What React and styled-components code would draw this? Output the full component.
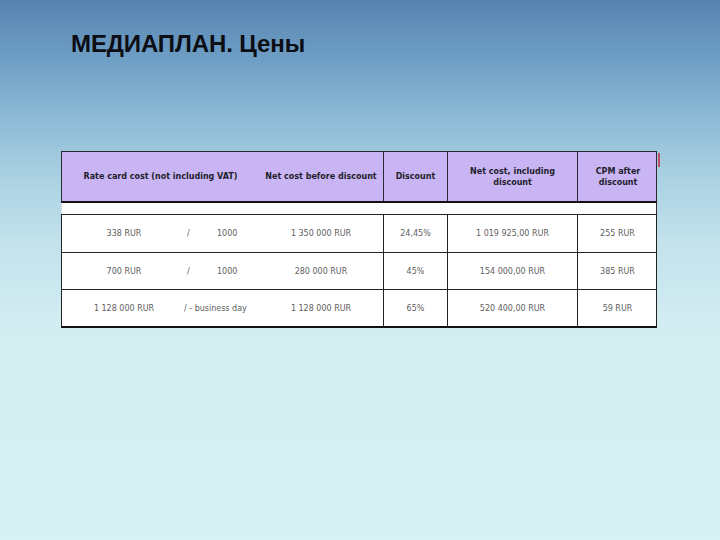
import React from "react";
import styled, { createGlobalStyle } from "styled-components";

const Global = createGlobalStyle`
  html, body { margin: 0; padding: 0; }
  body { width: 720px; height: 540px; overflow: hidden; }
`;

const Page = styled.div`
  width: 720px;
  height: 540px;
  box-sizing: border-box;
  padding: 30px 0 0 61px;
  background: linear-gradient(
    180deg,
    #5783b0 0%,
    #6c9cc3 10%,
    #8dbad6 22%,
    #a9d0e2 32%,
    #c2e2ec 45%,
    #d3edf2 60%,
    #d8f1f4 100%
  );
  font-family: "DejaVu Sans", Verdana, sans-serif;
`;

const Title = styled.h1`
  margin: 0 0 0 10px;
  font-family: "Liberation Sans", Arial, sans-serif;
  font-weight: 700;
  font-size: 24px;
  line-height: 28px;
  color: #0d0d14;
  letter-spacing: -0.1px;
`;

const Table = styled.div`
  margin-top: 93px;
  width: 596px;
`;

const HeaderRow = styled.div`
  position: relative;
  display: grid;
  grid-template-columns: 197px 124px 64px 130px 81px;
  height: 52px;
  box-sizing: border-box;
  background: #c9b5f3;
  border: 1px solid #2a2a33;
  border-bottom: 2px solid #111;
  &::after {
    content: "";
    position: absolute;
    right: -4px;
    top: 1px;
    width: 2px;
    height: 14px;
    background: #c0506a;
  }
`;

const HeadCell = styled.div`
  display: flex;
  align-items: center;
  justify-content: center;
  text-align: center;
  padding: 0 ${(p) => p.$pad || 4}px;
  font-size: 8px;
  font-weight: 700;
  line-height: 11px;
  color: #1e1e2c;
  border-left: ${(p) => (p.$line ? "1px solid #2a2a33" : "none")};
`;

const Gap = styled.div`
  height: 11px;
  background: #fdfefe;
  border-left: 1px solid #d6dde2;
  border-right: 1px solid #333;
`;

const Body = styled.div`
  border-top: 1px solid #222;
  border-bottom: 2px solid #111;
  border-left: 1px solid #222;
  border-right: 1px solid #222;
  background: #fff;
`;

const Row = styled.div`
  display: grid;
  grid-template-columns: 124px 73px 124px 64px 130px 80px;
  height: 37px;
  box-sizing: border-box;
  border-top: ${(p) => (p.$first ? "none" : "1px solid #222")};
`;

const Cell = styled.div`
  display: flex;
  align-items: center;
  justify-content: ${(p) => (p.$left ? "flex-start" : "center")};
  font-size: 8px;
  color: #5e5e5e;
  white-space: pre;
  border-left: ${(p) => (p.$line ? "1px solid #222" : "none")};
`;

const Slash = styled.span`
  display: inline-block;
  width: ${(p) => (p.$wide ? "30px" : "auto")};
  margin-left: ${(p) => (p.$wide ? "1px" : "-2px")};
`;

const rows = [
  { a: "338 RUR", slash: "/", per: "1000", net: "1 350 000 RUR", d: "24,45%", n: "1 019 925,00 RUR", c: "255 RUR" },
  { a: "700 RUR", slash: "/", per: "1000", net: "280 000 RUR", d: "45%", n: "154 000,00 RUR", c: "385 RUR" },
  { a: "1 128 000 RUR", slash: "/ - business day", per: "", net: "1 128 000 RUR", d: "65%", n: "520 400,00 RUR", c: "59 RUR" },
];

export default function App() {
  return (
    <Page>
      <Global />
      <Title>МЕДИАПЛАН. Цены</Title>
      <Table>
        <HeaderRow>
          <HeadCell>Rate card cost (not including VAT)</HeadCell>
          <HeadCell>Net cost before discount</HeadCell>
          <HeadCell $line>Discount</HeadCell>
          <HeadCell $line $pad={22}>Net cost, including discount</HeadCell>
          <HeadCell $line $pad={12}>CPM after discount</HeadCell>
        </HeaderRow>
        <Gap />
        <Body>
          {rows.map((r, i) => (
            <Row key={i} $first={i === 0}>
              <Cell>{r.a}</Cell>
              <Cell $left>
                <Slash $wide={!!r.per}>{r.slash}</Slash>
                {r.per}
              </Cell>
              <Cell>{r.net}</Cell>
              <Cell $line>{r.d}</Cell>
              <Cell $line>{r.n}</Cell>
              <Cell $line>{r.c}</Cell>
            </Row>
          ))}
        </Body>
      </Table>
    </Page>
  );
}
